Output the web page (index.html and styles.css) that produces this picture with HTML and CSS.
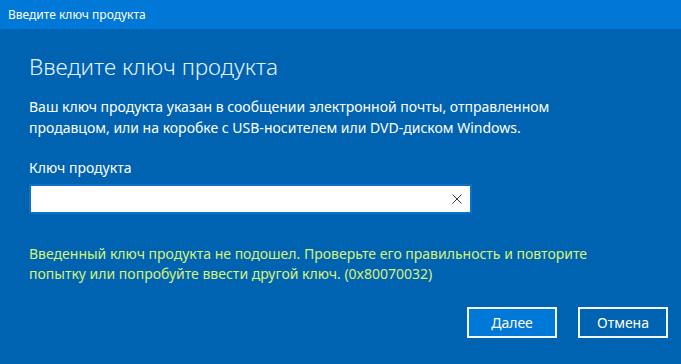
FILE: index.html
```html
<!DOCTYPE html>
<html lang="ru">
<head>
    <meta charset="UTF-8">
    <meta name="viewport" content="width=device-width, initial-scale=1.0">
    <title>Введите ключ продукта</title>
    <link rel="stylesheet" href="styles.css">
</head>
<body>
    <div class="window">
        <div class="titlebar">Введите ключ продукта</div>
        <div class="content">
            <h1>Введите ключ продукта</h1>
            <p class="desc">Ваш ключ продукта указан в сообщении электронной почты, отправленном продавцом, или на коробке с USB-носителем или DVD-диском Windows.</p>
            <label class="label" for="key">Ключ продукта</label>
            <div class="field">
                <input type="text" id="key">
                <span class="clear">
                    <svg width="10" height="10" viewBox="0 0 10 10"><path d="M0.5 0.5 L9.5 9.5 M9.5 0.5 L0.5 9.5" stroke="#333" stroke-width="1"/></svg>
                </span>
            </div>
            <p class="error">Введенный ключ продукта не подошел. Проверьте его правильность и повторите попытку или попробуйте ввести другой ключ. (0x80070032)</p>
        </div>
        <div class="buttons">
            <button class="btn primary">Далее</button>
            <button class="btn">Отмена</button>
        </div>
    </div>
</body>
</html>
```

FILE: styles.css
```css
*{
    margin: 0;
    padding: 0;
    box-sizing: border-box;
}
body{
    font-family: "Noto Sans", "Open Sans", sans-serif;
    background-color: #0063b1;
    color: #fff;
}
.window{
    width: 681px;
    height: 364px;
    display: flex;
    flex-direction: column;
}
.titlebar{
    height: 29px;
    background-color: #0078d7;
    font-size: 12px;
    line-height: 29px;
    padding-left: 8px;
}
.content{
    padding: 0 29px;
    flex: 1;
}
h1{
    font-size: 22.5px;
    font-weight: 300;
    color: #e6f3ff;
    margin-top: 24px;
    line-height: 28px;
}
.desc{
    font-size: 14px;
    line-height: 21px;
    margin-top: 15px;
    width: 560px;
}
.label{
    display: block;
    font-size: 14px;
    line-height: 20px;
    margin-top: 20px;
}
.field{
    position: relative;
    width: 443px;
    height: 30px;
    margin-top: 6px;
    background-color: #fff;
    border: 2px solid #0a72cc;
}
.field input{
    width: 100%;
    height: 100%;
    border: none;
    outline: none;
    padding: 0 30px 0 8px;
}
.clear{
    position: absolute;
    right: 8px;
    top: 8px;
    line-height: 0;
}
.error{
    font-size: 14px;
    line-height: 20px;
    color: #d6f27a;
    margin-top: 30px;
    width: 610px;
}
.buttons{
    display: flex;
    justify-content: flex-end;
    gap: 21px;
    padding: 0 13px 26px 0;
}
.btn{
    width: 90px;
    height: 31px;
    border: 2px solid #eef6ff;
    background-color: #0063b1;
    color: #fff;
    font-family: "Noto Sans", "Open Sans", sans-serif;
    font-size: 14px;
}
.btn.primary{
    background-color: #0078d7;
}
```
